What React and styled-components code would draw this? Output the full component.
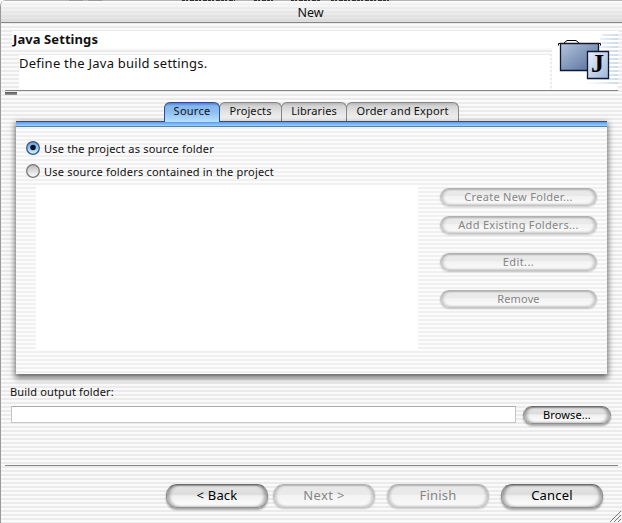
import React from "react";
import styled, { createGlobalStyle, css } from "styled-components";

const stripes = "repeating-linear-gradient(to bottom, #fafafa 0 2px, #ebebeb 2px 4px)";
const softStripes = "repeating-linear-gradient(to bottom, #fcfcfc 0 2px, #f0f0f0 2px 4px)";

const GlobalStyle = createGlobalStyle`
  * { box-sizing: border-box; }
  body { margin: 0; overflow: hidden; }
`;

const Window = styled.main`
  position: relative;
  width: 622px;
  height: 523px;
  display: flex;
  flex-direction: column;
  overflow: hidden;
  color: #111;
  font: 11px/16px "Noto Sans", "Open Sans", sans-serif;
  background: ${stripes};
  border-left: 1px solid #999;
  border-top-left-radius: 6px;
`;

const Text = styled.span`
  display: inline-block;
  white-space: nowrap;
  letter-spacing: ${(p) => p.$spacing || 0}px;
`;

const TitleBar = styled.header`
  height: 23px;
  flex: none;
  display: flex;
  justify-content: center;
  padding: 4px 2px 0 0;
  border-top: 1px solid #b5b5b5;
  border-bottom: 1px solid #858585;
  font-size: 12.5px;
  background: linear-gradient(#ffffff88, #d0d0d0a0), ${stripes};
`;

const Residue = styled.svg`
  position: absolute;
  left: 0;
  top: 0;
`;

const Header = styled.section`
  height: 68px;
  flex: none;
  display: flex;
  flex-direction: column;
  padding-top: 8px;
  border-bottom: 1px solid #858585;
  margin-right: 4px;
  margin-left: 4px;
`;

const HeaderRow = styled.div`
  display: flex;
`;

const Heading = styled.h1`
  margin: 0 0 0 7px;
  padding-left: 1px;
  width: 540px;
  height: 17px;
  background: #fff;
  font-size: 13px;
  line-height: 16px;
`;

const Description = styled.p`
  margin: 7px 0 0 14px;
  width: 531px;
  height: 35px;
  background: #fff;
  font-size: 13px;
  line-height: 17px;
`;

const HeaderIcon = styled.svg`
  display: block;
  flex: none;
  width: 66px;
  height: 59px;
`;

const ProgressStub = styled.div`
  width: 12px;
  height: 3px;
  margin: 1px 0 0 4px;
  background: linear-gradient(#555, #999);
`;

const TabStrip = styled.nav`
  display: flex;
  height: 19px;
  margin: 7px 0 0 163px;
`;

const Tab = styled.div`
  width: ${(p) => p.$width}px;
  height: 20px;
  display: flex;
  justify-content: center;
  line-height: 15px;
  border: 1px solid #858585;
  border-bottom: 0;
  border-radius: 6px 6px 0 0;
  background: linear-gradient(#b5b5b5, #d3d3d3 3px, #e2e2e2 45%, #fafafa);
  margin-right: -1px;
  ${(p) => p.$active && css`
    border-color: #28509a;
    background: linear-gradient(#4c82cc, #86b6ec 3px, #8dbdf0 45%, #b9e2ff);
    z-index: 1;
  `}
`;

const Panel = styled.section`
  width: 591px;
  height: 253px;
  flex: none;
  margin-left: 15px;
  background: ${softStripes};
  box-shadow: 0 3px 6px 1px #00000090;
`;

const PanelTop = styled.div`
  height: 6px;
  border-top: 1px solid #28509a;
  border-bottom: 1px solid #657d95;
  background: linear-gradient(#5c9bea, #9bd2ff);
`;

const RadioRow = styled.label`
  display: flex;
  align-items: center;
  height: 23px;
  padding-left: 10px;
  gap: 4px;
`;

const Choices = styled.div`
  padding-top: 10px;
  height: 58px;
`;

const PanelBody = styled.div`
  display: flex;
  gap: 22px;
  padding-left: 20px;
`;

const FolderList = styled.div`
  width: 382px;
  height: 165px;
  background: #fff;
`;

const Actions = styled.div`
  display: flex;
  flex-direction: column;
  padding-top: 3px;
`;

const Aqua = styled.button`
  width: ${(p) => p.$width}px;
  height: ${(p) => p.$height || 18}px;
  margin: 0 0 ${(p) => p.$after || 0}px;
  padding: 0 0 ${(p) => (p.$height ? 2 : 0)}px;
  flex: none;
  display: flex;
  align-items: center;
  justify-content: center;
  font: inherit;
  font-size: ${(p) => p.$size || 11}px;
  color: #000;
  border: 1px solid #8f8f8f;
  border-top-color: #6c6c6c;
  border-radius: ${(p) => p.$round || 9}px;
  background: linear-gradient(#e6e6e6, #dcdcdc 42%, #f0f0f0 50%, #fff);
  box-shadow: inset 0 1px 1px #0003, inset 3px 0 3px #0004, inset -3px 0 3px #0004, 0 2px 2px #0005;
  &:disabled {
    color: #858585;
    border-color: #c4c4c4;
    border-top-color: #b0b0b0;
    background: linear-gradient(#eaeaea, #e9e9e9 42%, #f3f3f3 48%, #fafafa);
    box-shadow: inset 0 1px 1px #0001, inset 2px 0 3px #0003, inset -2px 0 3px #0003, 0 1px 2px #0003;
  }
`;

const OutputLabel = styled.label`
  height: 21px;
  margin: 10px 0 0 9px;
`;

const OutputRow = styled.div`
  display: flex;
  height: 60px;
  flex: none;
  gap: 7px;
  padding-left: 10px;
`;

const OutputField = styled.input`
  width: 505px;
  height: 17px;
  margin: 1px 0 0;
  border: 1px solid #c5c5c5;
  border-top-color: #aaa;
  background: #fff;
`;

const BrowseSlot = styled.div`
  padding-top: 1px;
`;

const Footer = styled.footer`
  display: flex;
  height: 58px;
  flex: none;
  gap: 12px;
  margin: 0 4px;
  padding: 18px 0 0 161px;
  border-top: 1px solid #858585;
`;

const StepButtons = styled.div`
  display: flex;
  gap: 5px;
`;

const Grip = styled.svg`
  position: absolute;
  right: 1px;
  bottom: 1px;
`;

function Radio({ selected }) {
  return (
    <svg width="14" height="15" viewBox="0 0 14 15">
      <defs>
        <linearGradient id={selected ? "on" : "off"} x2="0" y2="1">
          <stop stopColor={selected ? "#6c9ddb" : "#bbb"} />
          <stop offset="1" stopColor={selected ? "#d4f4ff" : "#fff"} />
        </linearGradient>
      </defs>
      <circle cx="7" cy="7" r="6.3" fill={`url(#${selected ? "on" : "off"})`} stroke={selected ? "#34558a" : "#777"} strokeWidth="1.3" />
      {selected && <circle cx="7" cy="6.5" r="2.8" fill="#07152c" />}
    </svg>
  );
}

const tabs = [["Source", 56, 0.25], ["Projects", 63, 0.1], ["Libraries", 66, 0.1], ["Order and Export", 113, 0.15]];
const actions = [["Create New Folder...", 10, 0.3], ["Add Existing Folders...", 19, 0.3], ["Edit...", 19, 0.4], ["Remove", 0, 0.15]];

export default function App() {
  return (
    <>
      <GlobalStyle />
      <Window>
        <TitleBar><Text>New</Text></TitleBar>
        <Residue width="621" height="2">
          <path d="M68 .5h14M87 .5h14" stroke="#999" />
          <path d="M181 .5h53M253 .5h21M290 .5h29M330 .5h60" stroke="#333" strokeDasharray="3 1 2 2 4 1" />
        </Residue>
        <Header>
          <HeaderRow>
            <div>
              <Heading><Text $spacing={0.08}>Java Settings</Text></Heading>
              <Description><Text $spacing={0.24}>Define the Java build settings.</Text></Description>
            </div>
            <HeaderIcon viewBox="0 0 66 59">
              <defs>
                <linearGradient id="case" x2="1" y2="1"><stop stopColor="#b4c5dd" /><stop offset="1" stopColor="#526c98" /></linearGradient>
                <linearGradient id="page" x2="1" y2="1"><stop stopColor="#e9f0fc" /><stop offset="1" stopColor="#9fb6d8" /></linearGradient>
                <linearGradient id="glow"><stop stopColor="#d8e5f5" stopOpacity="0" /><stop offset="1" stopColor="#c9daee" /></linearGradient>
              </defs>
              <path d="M0 0H66V59H0z" fill="#fff" />
              <path d="M50 4h16M48 8h18M46 12h20M44 16h22M44 20h22M44 24h22M44 28h22M44 32h22M43 36h23M41 40h25M38 44h28M34 48h32M32 52h34" stroke="url(#glow)" strokeWidth="2" />
              <path d="M6.5 14.5V12.5h42v2" fill="none" stroke="#000" />
              <path d="M12 12l3-2.5h9l3 2.5" fill="none" stroke="#000" />
              <path d="M8.5 12.5h38v27h-38z" fill="url(#case)" stroke="#111830" strokeWidth="1.3" />
              <path d="M35.5 20.5h21v27h-21z" fill="url(#page)" stroke="#111830" strokeWidth="1.3" />
              <text x="39" y="41" fontFamily="Liberation Serif, serif" fontWeight="bold" fontSize="26">J</text>
            </HeaderIcon>
          </HeaderRow>
        </Header>
        <ProgressStub />
        <TabStrip>
          {tabs.map(([name, width, spacing], i) => (
            <Tab key={name} $width={width} $active={i === 0}><Text $spacing={spacing}>{name}</Text></Tab>
          ))}
        </TabStrip>
        <Panel>
          <PanelTop />
          <Choices>
            <RadioRow><Radio selected /><Text $spacing={0.2}>Use the project as source folder</Text></RadioRow>
            <RadioRow><Radio /><Text $spacing={0.2}>Use source folders contained in the project</Text></RadioRow>
          </Choices>
          <PanelBody>
            <FolderList />
            <Actions>
              {actions.map(([name, after, spacing]) => (
                <Aqua key={name} disabled $width={157} $after={after}><Text $spacing={spacing}>{name}</Text></Aqua>
              ))}
            </Actions>
          </PanelBody>
        </Panel>
        <OutputLabel><Text $spacing={0.15}>Build output folder:</Text></OutputLabel>
        <OutputRow>
          <OutputField aria-label="Build output folder" />
          <BrowseSlot><Aqua $width={88}><Text $spacing={0.1}>Browse...</Text></Aqua></BrowseSlot>
        </OutputRow>
        <Footer>
          <StepButtons>
            <Aqua $width={102} $height={24} $size={13} $round={11}><Text $spacing={0.2}>&lt; Back</Text></Aqua>
            <Aqua disabled $width={102} $height={24} $size={13} $round={11}><Text $spacing={0.4}>Next &gt;</Text></Aqua>
          </StepButtons>
          <Aqua disabled $width={102} $height={24} $size={13} $round={11}><Text $spacing={0.2}>Finish</Text></Aqua>
          <Aqua $width={102} $height={24} $size={13} $round={11}><Text $spacing={0.2}>Cancel</Text></Aqua>
        </Footer>
        <Grip width="11" height="11"><path d="M0 11L11 0M4 11l7-7M8 11l3-3" stroke="#777" /></Grip>
      </Window>
    </>
  );
}
